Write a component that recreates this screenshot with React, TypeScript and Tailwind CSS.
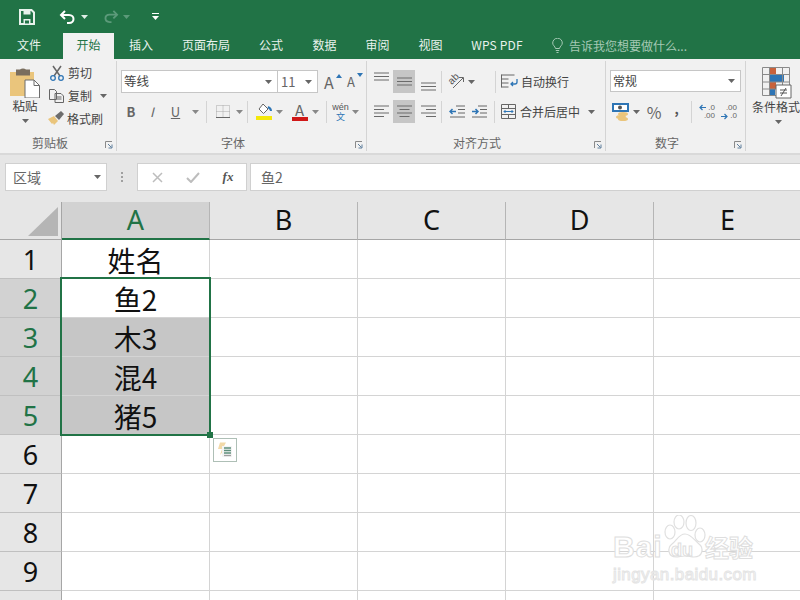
import React from "react";

const FONT = '"Noto Sans CJK SC", "Noto Sans", sans-serif';
const LATIN = '"Liberation Sans", sans-serif';

const Caret = ({ c = "#666" }: { c?: string }) => (
  <svg width="7" height="4" viewBox="0 0 7 4" className="shrink-0"><path d="M0 0h7L3.5 4z" fill={c} /></svg>
);

const Sep = ({ ml = 0, mr = 0 }: { ml?: number; mr?: number }) => (
  <div className="w-px h-[22px] bg-[#d4d4d4] shrink-0" style={{ marginLeft: ml, marginRight: mr }} />
);

const Launcher = () => (
  <svg width="8" height="8" viewBox="0 0 8 8" className="absolute right-[3px] bottom-[2px]">
    <path d="M0.5 7V0.5H7" fill="none" stroke="#8a8a8a" />
    <path d="M3 3l3.5 3.5M7 3.5V7H3.5" fill="none" stroke="#5f7f9c" />
  </svg>
);

const Slot = ({ w, children, className = "" }: { w: number; children?: React.ReactNode; className?: string }) => (
  <div className={`flex items-center justify-center shrink-0 h-full ${className}`} style={{ width: w }}>{children}</div>
);

const Row = ({ children }: { children: React.ReactNode }) => <div className="flex items-center h-[23px]">{children}</div>;

const Lines = ({ kind, w = 15 }: { kind: "l" | "c" | "r"; w?: number }) => {
  const rows = [1, 4.5, 8, 11.5];
  return (
    <svg width={w} height="13" viewBox="0 0 15 13">
      {rows.map((y, i) => {
        const len = i % 2 ? 10 : 15;
        const x = kind === "l" ? 0 : kind === "r" ? 15 - len : (15 - len) / 2;
        return <path key={y} d={`M${x} ${y}h${len}`} stroke="#6a6a6a" strokeWidth="1" />;
      })}
    </svg>
  );
};

const VLines = () => (
  <svg width="15" height="9" viewBox="0 0 15 9">
    <path d="M0 1h15M0 4.5h15M0 8h15" stroke="#6a6a6a" strokeWidth="1" />
  </svg>
);

const Paw = () => (
  <svg width="46" height="44" viewBox="0 0 46 44" className="absolute left-[61px] top-[15px]" fill="#fff" stroke="#e0e0e0" strokeWidth="1.2">
    <ellipse cx="9" cy="17" rx="5" ry="7" />
    <ellipse cx="18" cy="7" rx="5" ry="7" />
    <ellipse cx="30" cy="8" rx="5" ry="7.5" />
    <ellipse cx="39" cy="20" rx="5" ry="7" />
    <path d="M24 19c-6 0-8 6-13 10-5 4-4 13 4 13 3 0 6-1 9-1s6 1 9 1c9 0 10-9 5-13-5-4-8-10-14-10z" />
  </svg>
);

const tabs: [string, number, string][] = [
  ["文件", 63, "pr-[5px]"],
  ["开始", 51, ""],
  ["插入", 54, ""],
  ["页面布局", 76, ""],
  ["公式", 54, ""],
  ["数据", 53, ""],
  ["审阅", 53, ""],
  ["视图", 53, ""],
  ["WPS PDF", 80, "tracking-[0.2px]"],
];

const rowsData: { n: number; t: string; sel: boolean; grey: boolean }[] = [
  { n: 1, t: "姓名", sel: false, grey: false },
  { n: 2, t: "鱼2", sel: true, grey: false },
  { n: 3, t: "木3", sel: true, grey: true },
  { n: 4, t: "混4", sel: true, grey: true },
  { n: 5, t: "猪5", sel: true, grey: true },
  { n: 6, t: "", sel: false, grey: false },
  { n: 7, t: "", sel: false, grey: false },
  { n: 8, t: "", sel: false, grey: false },
  { n: 9, t: "", sel: false, grey: false },
  { n: 0, t: "", sel: false, grey: false },
];

export default function App() {
  return (
    <div className="w-[800px] h-[600px] overflow-hidden bg-[#e6e6e6] relative flex flex-col" style={{ fontFamily: FONT }}>
      {/* Quick access */}
      <div className="h-[33px] bg-[#217346] flex items-center shrink-0">
        <Slot w={54}>
          <svg width="16" height="16" viewBox="0 0 16 16" fill="none">
            <path d="M1 1h11.5L15 3.5V15H1z" stroke="#e8f2ec" strokeWidth="2" />
            <path d="M4.5 1.5h7v4h-7zM4.5 10h7v5h-7z" fill="#e8f2ec" />
            <path d="M6 11.5h4v3H6z" fill="#217346" />
          </svg>
        </Slot>
        <Slot w={26}>
          <svg width="16" height="14" viewBox="0 0 16 14" fill="none" stroke="#fff" strokeWidth="2">
            <path d="M6 1L2 5l4 4" />
            <path d="M2 5h8c3 0 4.500 2 4.500 4s-1.500 4-4.500 4H8" />
          </svg>
        </Slot>
        <Slot w={9}><Caret c="#dfeee6" /></Slot>
        <Slot w={33} className="pl-[11px]">
          <svg width="15" height="13" viewBox="0 0 16 14" fill="none" stroke="#5c9a7a" strokeWidth="2">
            <path d="M10 1l4 4-4 4" />
            <path d="M14 5H6C3 5 1.500 7 1.500 9s1.500 4 4.500 4h2" />
          </svg>
        </Slot>
        <Slot w={8}><Caret c="#5c9a7a" /></Slot>
        <Slot w={40} className="pl-[11px]">
          <svg width="7" height="8" viewBox="0 0 7 8"><path d="M0 .5h7" stroke="#fff" /><path d="M0 3h7L3.500 7z" fill="#fff" /></svg>
        </Slot>
      </div>

      {/* Tabs */}
      <div className="h-[26px] bg-[#217346] flex items-stretch shrink-0 text-[12px]">
        {tabs.map(([t, w, extra]) => (
          <div
            key={t}
            className={`flex items-center justify-center shrink-0 pb-[2px] ${extra} ${t === "开始" ? "bg-[#f1f1f1] text-[#217346]" : "text-[#e9f2ed]"}`}
            style={{ width: w }}
          >
            {t}
          </div>
        ))}
        <div className="flex items-center pl-[15px] pb-[1px] text-[#a5c9b5]">
          <svg width="11" height="15" viewBox="0 0 11 15" fill="none" stroke="#a5c9b5" className="mr-[6px]">
            <path d="M3.500 10.500C3 8 .7 7.500.7 5a4.800 4.800 0 0 1 9.600 0c0 2.500-2.300 3-2.800 5.500zM3.800 12.500h3.400M4.500 14.500h2" />
          </svg>
          告诉我您想要做什么...
        </div>
      </div>

      {/* Ribbon */}
      <div className="h-[96px] bg-[#f1f1f1] border-b-2 border-[#d9d9d9] flex shrink-0 text-[12px] text-[#444]">
        {/* Clipboard */}
        <div className="w-[117px] relative border-r border-[#d4d4d4] my-[2px] shrink-0 flex flex-col">
          <div className="h-[73px] shrink-0 flex">
            <div className="w-[48px] flex flex-col items-center pl-[2px] pt-[6px]">
              <svg width="30" height="31" viewBox="0 0 30 31" className="shrink-0">
                <path d="M0 5h24v24H0z" fill="#eac57c" />
                <path d="M6 2.500h4a4 3 0 0 1 6 0h4v6H6z" fill="#7a6e5e" />
                <path d="M15 13h9l5.500 5.500V31H15z" fill="#fff" stroke="#6d6d6d" />
                <path d="M24 13v5.500h5.500" fill="none" stroke="#6d6d6d" />
              </svg>
              <div className="-mt-[1px] leading-[18px] text-[12.500px]">粘贴</div>
              <div className="mt-[4px]"><Caret /></div>
            </div>
            <div className="flex-1 flex flex-col">
              <div className="flex items-center h-[23px]">
                <svg width="14" height="16" viewBox="0 0 14 16" fill="none" className="mr-[4px] ml-[2px]">
                  <path d="M3 1l7 10M11 1L4 11" stroke="#666" strokeWidth="1.500" />
                  <circle cx="3" cy="13" r="2.300" stroke="#2e75b5" strokeWidth="1.300" />
                  <circle cx="11" cy="13" r="2.300" stroke="#2e75b5" strokeWidth="1.300" />
                </svg>
                剪切
              </div>
              <div className="flex items-center h-[23px]">
                <svg width="15" height="14" viewBox="0 0 15 14" fill="none" stroke="#666" className="mr-[4px] ml-[1px]">
                  <path d="M.5.500h5l2 2v8h-7zM6 4.500h6l2.500 2.500v6.500H6z" fill="#f1f1f1" />
                  <path d="M8 8h4.500M8 10h4.500" />
                </svg>
                复制
                <span className="ml-[8px]"><Caret /></span>
              </div>
              <div className="flex items-center h-[23px]">
                <svg width="16" height="15" viewBox="0 0 16 15" className="mr-[3px]">
                  <path d="M0 8l6-3 4 5-4 4-1-2-1 1z" fill="#eac57c" />
                  <path d="M7 5l6-5 3 3-5 6z" fill="#6d6d6d" />
                </svg>
                格式刷
              </div>
            </div>
          </div>
          <div className="h-[18px] flex items-center pl-[32px] text-[#666]">剪贴板</div>
          <Launcher />
        </div>

        {/* Font */}
        <div className="w-[250px] relative border-r border-[#d4d4d4] my-[2px] shrink-0 flex flex-col">
          <div className="h-[73px] shrink-0 pt-[9px] pl-[4px] flex flex-col gap-[7px]">
            <div className="flex items-center h-[23px]">
              <div className="w-[157px] h-[23px] bg-white border border-[#c6c6c6] flex items-center justify-between pl-[2px] pr-[5px] text-[12.500px]">
                等线<Caret />
              </div>
              <div className="w-[40px] h-[23px] bg-white border border-[#c6c6c6] border-l-0 flex items-center justify-between pl-[3px] pr-[5px] text-[13px] text-[#666]">
                11<Caret />
              </div>
              <div className="relative w-[16px] ml-[6px] text-[16px] leading-none text-[#666]">A
                <svg width="6" height="4" viewBox="0 0 6 4" className="absolute right-[-2px] top-0"><path d="M3 0l3 4H0z" fill="#2e75b5" /></svg>
              </div>
              <div className="relative w-[14px] ml-[7px] text-[13px] leading-none text-[#666]">A
                <svg width="6" height="4" viewBox="0 0 6 4" className="absolute right-[-2px] top-[-2px]"><path d="M3 4L6 0H0z" fill="#2e75b5" /></svg>
              </div>
            </div>
            <Row>
              <Slot w={20} className="font-bold text-[13px] text-[#666]">B</Slot>
              <Slot w={22} className="italic text-[13px] text-[#666]">I</Slot>
              <Slot w={25} className="text-[13px] text-[#666] underline">U</Slot>
              <Slot w={15}><Caret c="#888" /></Slot>
              <Slot w={3} />
              <Sep />
              <Slot w={29} className="pl-[3px]">
                <svg width="14" height="13" viewBox="0 0 14 13" fill="none">
                  <path d="M.5.500h13v12H.5zM.5 6.500h13M7 .5v12" stroke="#a8a8a8" strokeDasharray="1 1" />
                  <path d="M0 12.500h14" stroke="#666" />
                </svg>
              </Slot>
              <Slot w={7}><Caret c="#888" /></Slot>
              <Slot w={4} />
              <Sep ml={0} />
              <Slot w={28} className="pl-[4px]">
                <svg width="17" height="17" viewBox="0 0 17 17" fill="none">
                  <path d="M7 1l5 5-4.500 4.500-4.500-4.500z" stroke="#666" fill="#fff" />
                  <path d="M12 4c2 1 3 2 3 4" stroke="#2e75b5" strokeWidth="2" />
                  <path d="M0 13h16v4H0z" fill="#f4e80a" />
                </svg>
              </Slot>
              <Slot w={7}><Caret c="#888" /></Slot>
              <Slot w={28} className="pl-[5px]">
                <div className="flex flex-col items-center leading-none">
                  <span className="text-[15px] text-[#666] h-[13px] leading-[13px]">A</span>
                  <span className="w-[16px] h-[4px] bg-[#d01818] mt-[1px]" />
                </div>
              </Slot>
              <Slot w={8}><Caret c="#888" /></Slot>
              <Slot w={3} />
              <Sep ml={4} />
              <Slot w={24} className="pl-[3px]">
                <div className="flex flex-col items-center leading-none">
                  <span className="text-[9px] text-[#555] leading-[10px]" style={{ fontFamily: LATIN }}>wén</span>
                  <span className="text-[9px] text-[#2e75b5] leading-[10px]">文</span>
                </div>
              </Slot>
              <Slot w={8}><Caret c="#888" /></Slot>
            </Row>
          </div>
          <div className="h-[18px] flex items-center pl-[104px] text-[#666]">字体</div>
          <Launcher />
        </div>

        {/* Alignment */}
        <div className="w-[239px] relative border-r border-[#d4d4d4] my-[2px] shrink-0 flex flex-col">
          <div className="h-[73px] shrink-0 pt-[9px] flex flex-col gap-[7px]">
            <Row>
              <Slot w={26} className="items-start pt-[2px] pl-[2px]"><VLines /></Slot>
              <Slot w={22} className="bg-[#c6c6c6]"><VLines /></Slot>
              <Slot w={26} className="items-end pb-[2px]"><VLines /></Slot>
              <Slot w={0} />
              <Sep ml={0} />
              <Slot w={26} className="pl-[3px]">
                <div className="relative w-[18px] h-[17px]">
                  <span className="absolute left-[0px] top-[0px] text-[10px] leading-[12px] text-[#555] -rotate-45 origin-center" style={{ fontFamily: LATIN }}>ab</span>
                  <svg width="18" height="17" viewBox="0 0 18 17" fill="none" stroke="#666" className="absolute left-0 top-0">
                    <path d="M5 15L15 5M11 4.500h4.500V9" />
                  </svg>
                </div>
              </Slot>
              <Slot w={7}><Caret /></Slot>
              <Slot w={20} />
              <Sep ml={0} />
              <Slot w={24} className="pl-[3px]">
                <svg width="17" height="15" viewBox="0 0 17 15" fill="none">
                  <path d="M.5 1h13M.5 5h7M.5 9h7M.5 13h7" stroke="#666" />
                  <path d="M.5.500v13" stroke="#666" />
                  <path d="M16 5v3c0 1-1 2-2 2h-4M12 8l-2 2 2 2" stroke="#2e75b5" strokeWidth="1.300" />
                </svg>
              </Slot>
              <span className="ml-[1px]">自动换行</span>
            </Row>
            <Row>
              <Slot w={26} className="pl-[2px]"><Lines kind="l" /></Slot>
              <Slot w={22} className="bg-[#c6c6c6]"><Lines kind="c" /></Slot>
              <Slot w={26}><Lines kind="r" /></Slot>
              <Slot w={0} />
              <Sep ml={0} />
              <div className="flex items-center pl-[7px] gap-[6px] w-[52px] shrink-0">
                <svg width="16" height="13" viewBox="0 0 16 13" fill="none">
                  <path d="M7 1h9M9 4.500h7M9 8h7M1 12h15" stroke="#666" />
                  <path d="M7 6.500H1M3.500 4L1 6.500 3.500 9" stroke="#2e75b5" strokeWidth="1.500" />
                </svg>
                <svg width="16" height="13" viewBox="0 0 16 13" fill="none">
                  <path d="M7 1h9M9 4.500h7M9 8h7M1 12h15" stroke="#666" />
                  <path d="M1 6.500h6M4.500 4L7 6.500 4.500 9" stroke="#2e75b5" strokeWidth="1.500" />
                </svg>
              </div>
              <Sep ml={0} />
              <Slot w={24} className="pl-[3px]">
                <svg width="15" height="15" viewBox="0 0 15 15" fill="none" stroke="#666">
                  <path d="M.5.500h14v14H.5zM.5 4.500h14M.5 10.500h14M7.500.5v4M7.500 10.500v4" />
                  <path d="M3 7.500h9M4.500 6L3 7.500 4.500 9M10.500 6L12 7.500 10.500 9" stroke="#2e75b5" />
                </svg>
              </Slot>
              <span className="ml-[1px] text-[12px]">合并后居中</span>
              <span className="ml-[8px]"><Caret /></span>
            </Row>
          </div>
          <div className="h-[18px] flex items-center pl-[86px] text-[#666]">对齐方式</div>
          <Launcher />
        </div>

        {/* Number */}
        <div className="w-[140px] relative border-r border-[#d4d4d4] my-[2px] shrink-0 flex flex-col">
          <div className="h-[73px] shrink-0 pt-[9px] pl-[4px] flex flex-col gap-[8px]">
            <div className="w-[131px] h-[22px] bg-white border border-[#c6c6c6] flex items-center justify-between pl-[2px] pr-[5px] text-[12px]">
              常规<Caret />
            </div>
            <Row>
              <Slot w={22}>
                <svg width="18" height="19" viewBox="0 0 18 19">
                  <path d="M0 1h17v9H0z" fill="#2e75b5" />
                  <path d="M2 3h13v5H2z" fill="#fff" />
                  <circle cx="8" cy="5.500" r="2" fill="#555" />
                  <ellipse cx="11" cy="12" rx="5" ry="2" fill="#eac57c" />
                  <ellipse cx="9" cy="15" rx="5" ry="2" fill="#eac57c" />
                  <ellipse cx="11" cy="17" rx="5" ry="2" fill="#eac57c" />
                </svg>
              </Slot>
              <Slot w={9}><Caret /></Slot>
              <Slot w={26} className="text-[16px] text-[#666]">%</Slot>
              <Slot w={19} className="font-bold text-[13px] text-[#555] pb-[5px]">,</Slot>
              <Slot w={5} />
              <Sep ml={0} />
              <Slot w={29} className="pl-[1px]">
                <div className="relative w-[16px] h-[16px] text-[8px] leading-[8px] text-[#666] text-right" style={{ fontFamily: LATIN }}>
                  <svg width="7" height="7" viewBox="0 0 7 7" className="absolute left-0 top-0" fill="none" stroke="#2e75b5" strokeWidth="1.200"><path d="M7 3.500H1M3.500 1L1 3.500 3.500 6" /></svg>
                  <div>.0</div><div>.00</div>
                </div>
              </Slot>
              <Slot w={16}>
                <div className="relative w-[16px] h-[16px] text-[8px] leading-[8px] text-[#666] text-right" style={{ fontFamily: LATIN }}>
                  <svg width="7" height="7" viewBox="0 0 7 7" className="absolute left-0 bottom-0" fill="none" stroke="#2e75b5" strokeWidth="1.200"><path d="M0 3.500h6M3.500 1L6 3.500 3.500 6" /></svg>
                  <div>.00</div><div>.0</div>
                </div>
              </Slot>
            </Row>
          </div>
          <div className="h-[18px] flex items-center pl-[49px] text-[#666]">数字</div>
          <Launcher />
        </div>

        {/* Styles */}
        <div className="flex-1 flex flex-col pt-[8px] pl-[6px] overflow-hidden">
          <svg width="30" height="32" viewBox="0 0 30 32" fill="none" className="ml-[10px] shrink-0">
            <path d="M8 .5h6v7H8zM8 15h6v7H8z" fill="#c8623c" />
            <path d="M8 8h14v7H8z" fill="#2e75b5" />
            <path d="M8 22h5v7H8z" fill="#2e75b5" />
            <path d="M.5.500h27v28H.5zM.5 7.500h27M.5 15h27M.5 22h27M7.500.5v28M20.500.5v28" stroke="#8a8a8a" />
            <path d="M14 18h15v13H14z" fill="#fff" stroke="#666" />
            <path d="M18 23h7M18 26h7M24 21l-5 8" stroke="#555" />
          </svg>
          <div className="-mt-[1px] whitespace-nowrap text-[12px] leading-[18px]">条件格式</div>
          <div className="mt-[4px] ml-[23px]"><Caret /></div>
        </div>
      </div>

      {/* Formula bar */}
      <div className="h-[47px] shrink-0 flex items-start pt-[8px] pl-[5px] text-[14px]">
        <div className="w-[102px] h-[28px] bg-white border border-[#d0d0d0] flex items-center justify-between pl-[7px] pr-[5px] text-[#666] shrink-0">
          区域<Caret />
        </div>
        <div className="w-[30px] h-[28px] flex flex-col items-center justify-center gap-[2px] shrink-0">
          <i className="block w-[2px] h-[2px] bg-[#a0a0a0]" />
          <i className="block w-[2px] h-[2px] bg-[#a0a0a0]" />
          <i className="block w-[2px] h-[2px] bg-[#a0a0a0]" />
        </div>
        <div className="w-[110px] h-[28px] bg-white border border-[#d0d0d0] flex items-center shrink-0">
          <Slot w={37} className="pl-[2px]">
            <svg width="11" height="11" viewBox="0 0 11 11" stroke="#bdbdbd" strokeWidth="1.500"><path d="M1 1l9 9M10 1l-9 9" /></svg>
          </Slot>
          <Slot w={35}>
            <svg width="14" height="11" viewBox="0 0 14 11" fill="none" stroke="#bdbdbd" strokeWidth="2"><path d="M1 6l4 4 8-9" /></svg>
          </Slot>
          <Slot w={36} className="italic text-[13px] text-[#555]"><span style={{ fontFamily: '"Liberation Serif", serif' }} className="font-bold">fx</span></Slot>
        </div>
        <div className="ml-[3px] flex-1 h-[28px] bg-white border border-[#d0d0d0] border-r-0 flex items-center pl-[10px] text-[#666]">鱼2</div>
      </div>

      {/* Sheet */}
      <div className="grid grid-cols-[62px_148px_148px_148px_148px_148px] auto-rows-[39px] grid-rows-[38px] relative bg-white">
        <div className="bg-[#e6e6e6] border-b border-r border-[#a6a6a6] relative overflow-hidden flex items-end justify-end pb-[3px] pr-[3px]">
          <svg width="30" height="29" viewBox="0 0 30 29"><path d="M30 0v29H0z" fill="#b5b5b5" /></svg>
        </div>
        {["A", "B", "C", "D", "E"].map((c) => (
          <div
            key={c}
            className={`border-r flex items-center justify-center text-[27px] ${
              c === "A"
                ? "bg-[#d2d2d2] text-[#217346] border-[#b5b5b5] border-b-2 border-b-[#217346]"
                : "bg-[#e6e6e6] text-[#111] border-[#b5b5b5] border-b border-b-[#a6a6a6]"
            }`}
            style={{ fontFamily: '"Noto Sans", sans-serif' }}
          >
            {c}
          </div>
        ))}
        {rowsData.map((r, idx) => (
          <React.Fragment key={idx}>
            <div
              className={`border-r border-r-[#a6a6a6] border-b border-b-[#c0c0c0] flex items-center justify-center text-[27px] pt-[3px] ${
                r.sel ? "bg-[#d2d2d2] text-[#217346]" : "bg-[#e6e6e6] text-[#111]"
              }`}
              style={{ fontFamily: '"Noto Sans", sans-serif' }}
            >
              {r.n > 0 ? r.n : ""}
            </div>
            <div className={`border-r border-b border-[#d4d4d4] flex items-center justify-center text-[28px] leading-none pt-[2px] text-[#111] ${r.grey ? "bg-[#c6c6c6] border-[#bdbdbd]" : ""}`}>
              {r.t}
            </div>
            {[0, 1, 2, 3].map((k) => (
              <div key={k} className="border-r border-b border-[#d4d4d4]" />
            ))}
          </React.Fragment>
        ))}

        {/* Selection */}
        <div className="absolute left-[60px] top-[75px] w-[151px] h-[159px] border-2 border-[#217346] pointer-events-none" />
        <div className="absolute left-[207px] top-[230px] w-[6px] h-[6px] bg-[#217346] pointer-events-none" />

        {/* Paste options */}
        <div className="absolute left-[213px] top-[236px] w-[24px] h-[24px] bg-white border border-[#aebfb6] flex items-center justify-center">
          <svg width="16" height="16" viewBox="0 0 16 16" fill="none">
            <path d="M3 0.500h6L6 6h3L3 13l2-6H1z" fill="#f2d9a8" />
            <path d="M5 4h10v11H5z" fill="#f4f4f4" />
            <path d="M7 6h7M7 8.500h7M7 11h7" stroke="#5e8f7b" strokeWidth="1.300" />
            <path d="M7 13.500h7" stroke="#a0a0a0" strokeWidth="1.300" />
          </svg>
        </div>
      </div>

      {/* Watermark */}
      <div className="absolute left-[600px] top-[500px] w-[200px] h-[100px] pointer-events-none" style={{ fontFamily: LATIN }}>
        <span className="absolute left-[13px] top-[30px] text-[30px] leading-[34px] font-bold tracking-[1px] text-white [-webkit-text-stroke:1px_#dedede]">Bai</span>
        <Paw />
        <span className="absolute left-[71px] top-[40px] text-[18px] leading-[20px] font-bold text-white [-webkit-text-stroke:1px_#dedede]">du</span>
        <span className="absolute left-[105px] top-[33px] text-[24px] leading-[28px] font-bold text-white [-webkit-text-stroke:1px_#dedede]" style={{ fontFamily: FONT }}>经验</span>
        <span className="absolute left-[13px] top-[65px] text-[17px] leading-[20px] text-white [-webkit-text-stroke:1px_#e4e4e4] tracking-[0.4px]">jingyan.baidu.com</span>
      </div>
    </div>
  );
}
